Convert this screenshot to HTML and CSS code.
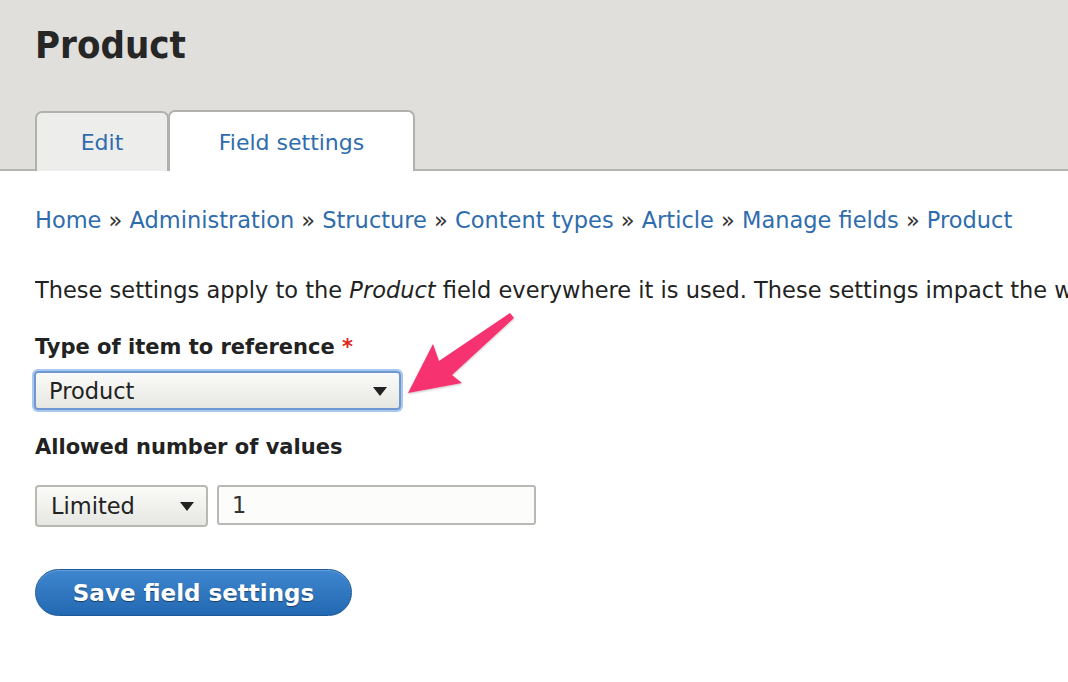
FILE: index.html
```html
<!DOCTYPE html>
<html>
<head>
<meta charset="utf-8">
<link rel="stylesheet" href="styles.css">
</head>
<body>
<header class="page-head">
  <h1 class="title">Product</h1>
  <nav class="tabs">
    <a class="tab tab-edit">Edit</a>
    <a class="tab tab-active">Field settings</a>
  </nav>
</header>
<main class="content">
  <div class="breadcrumb">
    <a>Home</a> » <a>Administration</a> » <a>Structure</a> » <a>Content types</a> » <a>Article</a> » <a>Manage fields</a> » <a>Product</a>
  </div>
  <p class="desc">These settings apply to the <em>Product</em> field everywhere it is used. These settings impact the way that data is stored.</p>
  <div class="field field-type">
    <label class="label">Type of item to reference <span class="req">*</span></label>
    <div class="select select-wide focused"><span>Product</span><i class="caret"></i></div>
  </div>
  <div class="field field-count">
    <label class="label">Allowed number of values</label>
    <div class="row">
      <div class="select select-small"><span>Limited</span><i class="caret"></i></div>
      <div class="input">1</div>
    </div>
  </div>
  <button class="btn">Save field settings</button>
</main>
<svg class="pointer" width="140" height="110" viewBox="0 0 140 110">
  <defs>
    <filter id="sh" x="-20%" y="-20%" width="140%" height="140%">
      <feDropShadow dx="0" dy="1" stdDeviation="1.2" flood-color="#000" flood-opacity="0.25"/>
    </filter>
  </defs>
  <polygon filter="url(#sh)" fill="#f7336f" points="8,93 33,44 39,61 110,13 114,18 52,75 62,83"/>
</svg>
</body>
</html>
```
FILE: styles.css
```css
html, body {
  margin: 0;
  padding: 0;
  background: #fff;
  overflow: hidden;
  width: 1068px;
  height: 682px;
}
body {
  font-family: "DejaVu Sans", sans-serif;
  color: #222;
  position: relative;
}
.page-head {
  background: #e0dfdb;
  border-bottom: 2px solid #b4b4b0;
  padding: 0 0 0 35px;
  height: 169px;
  display: flex;
  flex-direction: column;
  justify-content: space-between;
}
.title {
  margin: 0;
  padding-top: 22px;
  font-family: "DejaVu Sans Condensed", "DejaVu Sans", sans-serif;
  font-weight: bold;
  font-size: 38px;
  line-height: 46px;
  color: #262626;
}
.tabs {
  display: flex;
  align-items: flex-end;
  margin-bottom: -2px;
}
.tab {
  display: flex;
  align-items: center;
  justify-content: center;
  box-sizing: border-box;
  height: 60px;
  border: 2px solid #b0b0ac;
  border-bottom: none;
  border-radius: 7px 7px 0 0;
  background: #ededeb;
  color: #2f6cad;
  font-size: 22px;
  padding-top: 1px;
}
.tab-edit {
  width: 134px;
}
.tab-active {
  width: 247px;
  height: 61px;
  margin-left: -1px;
  background: #fff;
}
.content {
  padding: 0 35px;
}
.breadcrumb {
  margin-top: 34px;
  font-size: 22.5px;
  line-height: 30px;
  color: #333;
  white-space: nowrap;
}
.breadcrumb a {
  color: #2f6cad;
}
.desc {
  margin: 40px 0 0;
  font-size: 22.5px;
  line-height: 30px;
  white-space: nowrap;
  overflow: hidden;
  width: 1033px;
}
.field-type {
  margin-top: 27px;
}
.field-count {
  margin-top: 22px;
}
.label {
  display: block;
  font-weight: bold;
  font-size: 21px;
  line-height: 30px;
  color: #222;
}
.req {
  color: #e0281f;
}
.select {
  position: relative;
  display: flex;
  align-items: center;
  box-sizing: border-box;
  border: 2px solid #b8b8b4;
  border-radius: 4px;
  background: linear-gradient(#fbfbf9, #e6e6e2);
  font-size: 22.5px;
  color: #222;
  padding-left: 13px;
}
.select-wide {
  width: 367px;
  height: 39px;
  margin-top: 9px;
}
.focused {
  border-color: #6e98cf;
  box-shadow: 0 0 0 2px #a8c8f0;
  margin-left: -1px;
}
.caret {
  position: absolute;
  right: 12px;
  top: 50%;
  margin-top: -4px;
  width: 0;
  height: 0;
  border-left: 7px solid transparent;
  border-right: 7px solid transparent;
  border-top: 9px solid #222;
}
.row {
  display: flex;
  align-items: flex-start;
  gap: 9px;
  margin-top: 23px;
}
.select-small {
  width: 173px;
  height: 42px;
  padding-left: 14px;
}
.input {
  box-sizing: border-box;
  width: 319px;
  height: 40px;
  border: 2px solid #b8b8b4;
  border-radius: 3px;
  background: #fcfcfa;
  font-size: 22.5px;
  display: flex;
  align-items: center;
  padding-left: 13px;
  color: #333;
}
.btn {
  display: block;
  margin-top: 42px;
  width: 317px;
  height: 47px;
  border-radius: 24px;
  border: 1px solid #1e5a9a;
  background: linear-gradient(#3e87cf, #2368b2);
  color: #fff;
  font-family: "DejaVu Sans", sans-serif;
  font-weight: bold;
  font-size: 23px;
  text-shadow: 0 1px 1px rgba(0,0,0,0.45);
  box-shadow: inset 0 1px 0 rgba(255,255,255,0.2);
  padding: 0;
}
.pointer {
  position: absolute;
  left: 400px;
  top: 300px;
}
```
